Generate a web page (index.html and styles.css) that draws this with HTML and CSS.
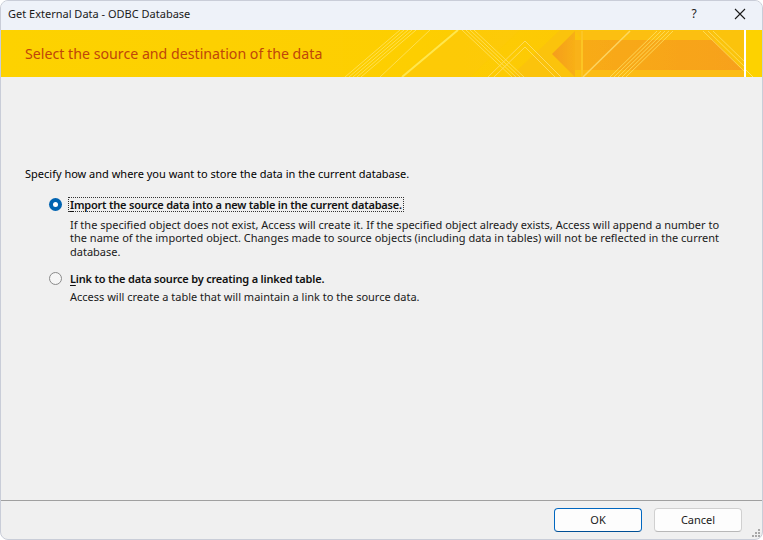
FILE: index.html
```html
<!DOCTYPE html>
<html>
<head>
  <link rel="stylesheet" href="styles.css">
</head>
<body>
  <div class="window">
    <div class="titlebar">
      <span class="title">Get External Data - ODBC Database</span>
      <span class="caption-btns">
        <span class="help">?</span>
        <svg class="close" width="12" height="12" viewBox="0 0 12 12">
          <path d="M1 1 L11 11 M11 1 L1 11" stroke="#1a1a1a" stroke-width="1.1" fill="none"/>
        </svg>
      </span>
    </div>

    <div class="banner">
      <svg class="banner-art" viewBox="1 30 761 47" preserveAspectRatio="none">
        <defs>
          <linearGradient id="bg" x1="0" y1="0" x2="1" y2="0">
            <stop offset="0" stop-color="#fdd200"/>
            <stop offset="0.55" stop-color="#fdce02"/>
            <stop offset="1" stop-color="#fcc20a"/>
          </linearGradient>
          <linearGradient id="arrow" x1="0" y1="0" x2="1" y2="0">
            <stop offset="0" stop-color="#f59d1d"/>
            <stop offset="1" stop-color="#f8b016"/>
          </linearGradient>
          <linearGradient id="shaft" x1="0" y1="0" x2="1" y2="0">
            <stop offset="0" stop-color="#f8ab17"/>
            <stop offset="1" stop-color="#f7a11c"/>
          </linearGradient>
        </defs>
        <rect x="1" y="30" width="761" height="47" fill="url(#bg)"/>
        <!-- soft panels -->
        <polygon points="400,77 455,30 520,30 470,77" fill="#fcc90a" opacity="0.7"/>
        <polygon points="510,77 560,30 744,30 744,77" fill="#fbc30d"/>
        <!-- arrow -->
        <polygon points="575,31 710,31 717,40 583,40" fill="#fcbf12"/>
        <polygon points="583,40 713,40 743,70 583,70" fill="url(#shaft)"/>
        <polygon points="583,70 743,70 744,77 583,77" fill="#fcbd14"/>
        <polygon points="552,54 575,31 575,77" fill="url(#arrow)"/>
        <rect x="575" y="40" width="6" height="30" fill="#f9b21a"/>
        <rect x="581" y="31" width="2" height="46" fill="#fcc524"/>
        <!-- diagonal stripes -->
        <g stroke="#ffe56a" stroke-width="1" opacity="0.75" fill="none">
          <path d="M345 77 L400 30 M349 77 L404 30 M353 77 L408 30 M357 77 L412 30 M361 77 L416 30"/>
          <path d="M402 77 L458 30" stroke="#fff066" stroke-width="2"/>
          <path d="M462 30 L512 77 M466 30 L516 77 M470 30 L520 77 M474 30 L524 77"/>
          <path d="M488 77 L525 41 L561 77 M494 77 L525 47 L555 77" stroke="#ffe07a"/>
          <path d="M583 77 L630 31" stroke="#ffe27a" stroke-width="1.5"/>
          <path d="M610 77 L657 31 M614 77 L661 31 M618 77 L665 31 M622 77 L669 31 M626 77 L673 31"/>
          <path d="M703 31 L745 72 M708 31 L745 67 M713 31 L745 62"/>
          <path d="M380 77 L430 30" stroke="#fde46a"/>
        </g>
        <rect x="744" y="30" width="2" height="47" fill="#ffffff"/>
        <rect x="746" y="30" width="16" height="47" fill="#fdd200"/>
        <path d="M746 70 L753 77" stroke="#ffe36b" stroke-width="1"/>
      </svg>
      <h1 class="banner-title">Select the source and destination of the data</h1>
    </div>

    <div class="content">
      <p class="intro">Specify how and where you want to store the data in the current database.</p>

      <div class="option">
        <span class="radio checked"></span>
        <div class="option-body">
          <span class="option-label focused"><u>I</u>mport the source data into a new table in the current database.</span>
          <p class="option-desc">If the specified object does not exist, Access will create it. If the specified object already exists, Access will append a number to the name of the imported object. Changes made to source objects (including data in tables) will not be reflected in the current database.</p>
        </div>
      </div>

      <div class="option second">
        <span class="radio"></span>
        <div class="option-body">
          <span class="option-label"><u>L</u>ink to the data source by creating a linked table.</span>
          <p class="option-desc">Access will create a table that will maintain a link to the source data.</p>
        </div>
      </div>
    </div>

    <div class="footer">
      <button class="btn default">OK</button>
      <button class="btn">Cancel</button>
      <svg class="grip" width="8" height="8" viewBox="0 0 8 8">
        <g fill="#a8a8a8">
          <rect x="6" y="0" width="2" height="2"/>
          <rect x="3" y="3" width="2" height="2"/>
          <rect x="6" y="3" width="2" height="2"/>
          <rect x="0" y="6" width="2" height="2"/>
          <rect x="3" y="6" width="2" height="2"/>
          <rect x="6" y="6" width="2" height="2"/>
        </g>
      </svg>
    </div>
  </div>
</body>
</html>
```
FILE: styles.css
```css
*{
    margin:0;
    padding:0;
    box-sizing:border-box;
}
body{
    width:763px;
    height:540px;
    background:#fff;
    font-family:"Noto Sans","Open Sans",sans-serif;
    font-size:11px;
    color:#000;
}
.window{
    width:763px;
    height:540px;
    border:1px solid #c9cdd8;
    border-radius:8px;
    overflow:hidden;
    background:#f0f0f0;
    display:flex;
    flex-direction:column;
}
.titlebar{
    height:29px;
    flex:none;
    background:#eef2f9;
    display:flex;
    align-items:center;
    justify-content:space-between;
    padding:0 0 4px 7px;
}
.title{
    font-size:11px;
    color:#1a1a1a;
}
.caption-btns{
    display:flex;
    align-items:center;
    height:100%;
}
.help{
    width:46px;
    text-align:center;
    font-size:12px;
    color:#1a1a1a;
    margin-top:-1px;
}
.close{
    margin:0 16px 0 17px;
}
.banner{
    height:47px;
    flex:none;
    position:relative;
    display:flex;
    align-items:center;
    padding-left:24px;
}
.banner-art{
    position:absolute;
    left:0;
    top:0;
    width:100%;
    height:100%;
}
.banner-title{
    position:relative;
    font-weight:normal;
    font-size:14.2px;
    color:#c0460a;
}
.content{
    flex:1;
    padding:90px 24px 0 24px;
}
.intro{
    line-height:13px;
}
.option{
    display:flex;
    align-items:flex-start;
    margin-top:17px;
    padding-left:24px;
}
.option.second{
    margin-top:13px;
}
.radio{
    flex:none;
    width:13px;
    height:13px;
    border-radius:50%;
    border:1px solid #8a8a8a;
    background:#f6f6f6;
    margin-top:1px;
    margin-right:6px;
}
.radio.checked{
    border:none;
    background:#0063b1;
    position:relative;
}
.radio.checked::after{
    content:"";
    position:absolute;
    left:4px;
    top:4px;
    width:5px;
    height:5px;
    border-radius:50%;
    background:#fff;
}
.option-body{
    display:flex;
    flex-direction:column;
    align-items:flex-start;
}
.option-label{
    font-weight:600;
    letter-spacing:-0.2px;
    line-height:13px;
    padding:0 1px;
    border:1px dotted transparent;
    color:#111;
}
.option-label.focused{
    border-color:#333;
}
.option-label u{
    text-decoration:underline;
    text-underline-offset:2px;
}
.option-desc{
    line-height:13.3px;
    margin:6px 0 0 2px;
    width:660px;
    color:#1a1a1a;
}
.second .option-desc{
    margin-top:4px;
}
.footer{
    height:39px;
    flex:none;
    border-top:1px solid #a0a0a0;
    display:flex;
    justify-content:flex-end;
    align-items:flex-start;
    gap:12px;
    padding:7px 20px 0 0;
    position:relative;
}
.btn{
    width:88px;
    height:24px;
    border:1px solid #d0d0d0;
    border-bottom-color:#b8b8b8;
    border-radius:4px;
    background:#fdfdfd;
    font-family:"Noto Sans","Open Sans",sans-serif;
    font-size:11px;
    color:#1a1a1a;
    padding-bottom:1px;
}
.btn.default{
    border:1px solid #0067c0;
    border-bottom-color:#004f94;
}
.grip{
    position:absolute;
    right:2px;
    bottom:2px;
}
```
